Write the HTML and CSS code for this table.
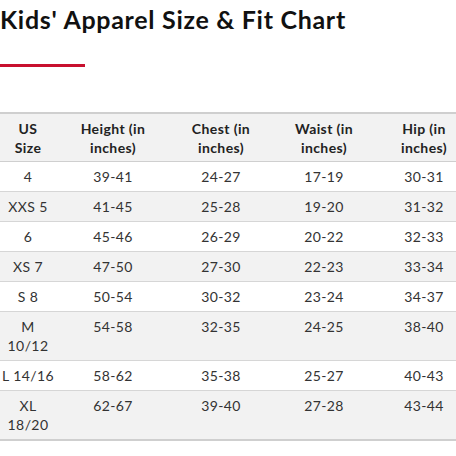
FILE: index.html
```html
<!DOCTYPE html>
<html>
<head>
<meta charset="utf-8">
<link rel="stylesheet" href="styles.css">
</head>
<body>
<h1 class="title">Kids' Apparel Size &amp; Fit Chart</h1>
<div class="accent"></div>
<div class="table-wrap">
<table class="chart">
<colgroup>
<col class="c1"><col class="c2"><col class="c3"><col class="c4"><col class="c5">
</colgroup>
<thead>
<tr><th>US<br>Size</th><th>Height (in<br>inches)</th><th>Chest (in<br>inches)</th><th>Waist (in<br>inches)</th><th>Hip (in<br>inches)</th></tr>
</thead>
<tbody>
<tr><td>4</td><td>39-41</td><td>24-27</td><td>17-19</td><td>30-31</td></tr>
<tr><td>XXS 5</td><td>41-45</td><td>25-28</td><td>19-20</td><td>31-32</td></tr>
<tr><td>6</td><td>45-46</td><td>26-29</td><td>20-22</td><td>32-33</td></tr>
<tr><td>XS 7</td><td>47-50</td><td>27-30</td><td>22-23</td><td>33-34</td></tr>
<tr><td>S 8</td><td>50-54</td><td>30-32</td><td>23-24</td><td>34-37</td></tr>
<tr><td>M<br>10/12</td><td>54-58</td><td>32-35</td><td>24-25</td><td>38-40</td></tr>
<tr><td>L 14/16</td><td>58-62</td><td>35-38</td><td>25-27</td><td>40-43</td></tr>
<tr><td>XL<br>18/20</td><td>62-67</td><td>39-40</td><td>27-28</td><td>43-44</td></tr>
</tbody>
</table>
</div>
</body>
</html>
```
FILE: styles.css
```css
html, body {
  margin: 0;
  padding: 0;
  background: #fff;
}
body {
  font-family: Lato, "Open Sans", sans-serif;
  overflow: hidden;
}
.title {
  margin: 0;
  padding-top: 4px;
  font-size: 25px;
  line-height: 30px;
  font-weight: 700;
  letter-spacing: 0.7px;
  color: #111;
}
.accent {
  margin-top: 30px;
  width: 85px;
  height: 3px;
  background: #c8102e;
}
.table-wrap {
  margin-top: 45px;
  width: 456px;
  overflow: hidden;
}
.chart {
  border-collapse: collapse;
  width: 472px;
  table-layout: fixed;
  font-size: 14px;
  line-height: 19px;
  letter-spacing: 0.4px;
  color: #333;
  border-top: 2px solid #cfcfcf;
  border-bottom: 2px solid #cfcfcf;
}
.c1 { width: 56px; }
.c2 { width: 114px; }
.c3 { width: 102px; }
.c4 { width: 104px; }
.c5 { width: 96px; }
.chart th {
  font-weight: 700;
  color: #222;
  text-align: center;
  padding: 5px 0 4px;
  background: #f2f2f2;
  border-bottom: 1px solid #cfcfcf;
  white-space: nowrap;
}
.chart td {
  text-align: center;
  vertical-align: top;
  padding: 5px 0;
  border-bottom: 1px solid #d6d6d6;
  white-space: nowrap;
}
.chart tbody tr:nth-child(even) td {
  background: #f2f2f2;
}
```
